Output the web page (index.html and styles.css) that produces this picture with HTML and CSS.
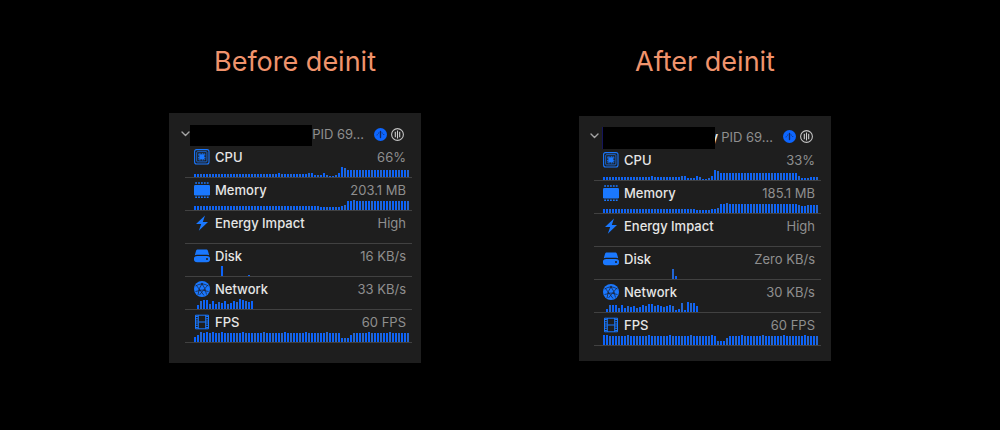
FILE: index.html
```
<!DOCTYPE html>
<html lang="en">
<head>
  <meta charset="UTF-8" />
  <meta name="viewport" content="width=device-width, initial-scale=1.0" />
  <title>Before and after deinit</title>
  <link rel="stylesheet" href="styles.css">
</head>
<body>
  <!-- shared icons -->
  <svg class="sprite" aria-hidden="true">
    <symbol id="chevron" viewBox="0 0 9 6"><path d="M1 1l3.500 3.500L8 1" fill="none" stroke="#a5a5a5" stroke-width="1.400" stroke-linecap="round" stroke-linejoin="round"/></symbol>
    <symbol id="gauge" viewBox="0 0 13 13">
      <circle cx="6.500" cy="6.500" r="6.500" fill="#0d66ff"/>
      <path d="M3 7.300a3.600 3.600 0 0 1 7 0" fill="none" stroke="#12265c" stroke-width="1" stroke-dasharray="1 1"/>
      <path d="M6.500 3.500v6" stroke="#12265c" stroke-width="1.300" stroke-linecap="round"/>
    </symbol>
    <symbol id="threads" viewBox="0 0 13 13">
      <circle cx="6.500" cy="6.500" r="5.900" fill="none" stroke="#c4c4c4" stroke-width="1.100"/>
      <path d="M4.300 3.700v5.600M6.500 2.500v8M8.700 3.700v5.600" stroke="#d0d0d0" stroke-width="1.100"/>
    </symbol>
    <symbol id="cpu" viewBox="0 0 16 16">
      <rect x=".6" y=".6" width="14.400" height="14.400" rx="2" fill="none" stroke="#1a78ff" stroke-width="1.100"/>
      <rect x="2.700" y="2.700" width="10.200" height="10.200" rx=".8" fill="none" stroke="#1a78ff" stroke-width=".8"/>
      <rect x="5.300" y="5.300" width="5" height="5" fill="#1a78ff"/>
      <path d="M4.800 4.800h6M4.800 10.800h6" stroke="#1a78ff" stroke-width="1.200" stroke-dasharray=".9 .7"/>
      <path d="M4.800 4.800v6M10.800 4.800v6" stroke="#1a78ff" stroke-width="1.200" stroke-dasharray=".9 .7"/>
    </symbol>
    <symbol id="memory" viewBox="0 0 16 16">
      <rect y="3" width="16" height="10.500" rx="1.200" fill="#1a78ff"/>
      <path d="M1.200 1h14M1.200 15.200h14" stroke="#1a78ff" stroke-width="1.600" stroke-dasharray="1.800 1.100"/>
    </symbol>
    <symbol id="energy" viewBox="0 0 16 16"><path d="M11 .5L2 9h5.200L4.800 15.800 14 7H8.800z" fill="#1a78ff"/></symbol>
    <symbol id="disk" viewBox="0 0 16 16">
      <path d="M3.900 1.500h8.200c1 0 1.500.5 1.900 1.400L15.200 7.300q-1-.5-2-.5H2.800q-1 0-2 .5L2 2.900c.4-.9.900-1.400 1.900-1.400z" fill="#1a78ff"/>
      <path fill-rule="evenodd" d="M3 7.900h10a3 3 0 0 1 0 6.300H3a3 3 0 0 1 0-6.300zM13 10.100a1 1 0 1 0 .01 2 1 1 0 0 0-.01-2z" fill="#1a78ff"/>
    </symbol>
    <symbol id="network" viewBox="0 0 16 16">
      <circle cx="8" cy="8" r="8" fill="#1a78ff"/>
      <g fill="none" stroke="#1b2a48" stroke-width=".8">
        <path d="M1.500 5Q5 3 8 2.800q3 .2 6.500 2.200M8 2.800Q4.500 7 4 14M8 2.800Q11.500 7 12.500 13.500M1.500 10.500Q8 7.500 14.500 10.500M2 4l4 5 4 5.500M14 4l-4.500 5L5.500 14"/>
      </g>
      <path d="M8 1.600L9.200 3 8 4.400 6.800 3zM5.400 8L6.600 9 5.400 10.200 4.200 9zM10.600 8l1.200 1-1.200 1.200L9.400 9z" fill="#1b2a48"/>
    </symbol>
    <symbol id="film" viewBox="0 0 16 16">
      <path d="M1.500 1.200h13v13.600h-13zM4.300 1v14M11.700 1v14M4.300 8h7.400" fill="none" stroke="#1a78ff" stroke-width="1"/>
      <path d="M2.900 2v12M13.100 2v12" stroke="#1a78ff" stroke-width="2" stroke-dasharray="1 1.200"/>
    </symbol>
  </svg>

  <main class="compare">
    <section class="side">
      <h1 class="title">Before deinit</h1>
      <div class="panel" id="before">
        <header class="process">
          <svg class="chevron"><use href="#chevron"/></svg>
          <span class="redacted"></span>
          <span class="pid">PID 69…</span>
          <svg class="badge"><use href="#gauge"/></svg>
          <svg class="badge"><use href="#threads"/></svg>
        </header>
      </div>
    </section>
    <section class="side side-after">
      <h1 class="title">After deinit</h1>
      <div class="panel" id="after">
        <header class="process">
          <svg class="chevron"><use href="#chevron"/></svg>
          <span class="redacted"></span>
          <span class="name">y</span>
          <span class="pid">PID 69…</span>
          <svg class="badge"><use href="#gauge"/></svg>
          <svg class="badge"><use href="#threads"/></svg>
        </header>
      </div>
    </section>
  </main>

  <script src="gauges.js"></script>
</body>
</html>
```
FILE: styles.css
```
* { box-sizing: border-box; }
body {
  margin: 0;
  background: #000;
  color: #e6e6e6;
  font-family: Inter, "Liberation Sans", sans-serif;
  font-size: 13px;
}
.sprite { display: none; }

.compare {
  display: flex;
  justify-content: center;
  align-items: flex-start;
  gap: 158px;
  padding: 44px 16px;
}
.side { flex: 0 1 252px; }
.title {
  margin: 0 0 33px;
  color: #f0936c;
  font-size: 27px;
  font-weight: 400;
  line-height: 36px;
  text-align: center;
  white-space: nowrap;
}
.panel {
  background: #1e1e1e;
  padding: 12px 9px 20px 16px;
}
.side-after .title { margin-bottom: 36px; }
.side-after .panel { padding: 11px 10px 15px 15px; }

/* process header */
.process {
  display: flex;
  align-items: flex-start;
  height: 20px;
  margin-left: -4px;
  padding-right: 8px;
  line-height: 18px;
}
.side-after .process { height: 21px; line-height: 20px; }
.chevron { flex: none; width: 9px; height: 6px; margin-top: 6px; }
.redacted { flex: 1; height: 21px; background: #000; }
/* the bar covers most of the name */
.side-after .redacted {
  position: relative;
  height: 22px;
  margin-left: 3px;
  margin-right: -5px;
  border-left: 1px solid #15155c;
}
.name { margin-right: 3px; font-weight: 600; }
.pid { color: #8f8f8f; margin-right: 10px; white-space: nowrap; }
.badge { flex: none; width: 13px; height: 13px; margin-top: 3px; }
.badge + .badge { margin-left: 4px; }

/* gauge rows */
.gauge { border-bottom: 1px solid #414141; padding-top: 2px; }
.gauge-head {
  display: flex;
  align-items: center;
  height: 20px;
  padding: 0 6px 0 9px;
}
.icon { width: 16px; height: 16px; margin-right: 5px; }
.label { font-weight: 500; }
.value { margin-left: auto; color: #8f8f8f; }
.bars {
  display: flex;
  align-items: flex-end;
  gap: 1px;
  height: 10px;
  padding-left: 9px;
}
.bar { flex: 0 0 2px; background: #0c63fa; }
.bar:nth-child(3n) { background: #2566d0; }
```
FILE: gauges.js
```
const rep = (n, h) => Array(n).fill(h);

// about 60 fps with small peaks
const fps = (start, n) => Array.from({ length: n }, (_, i) => ((i + start) % 7 === 2 ? 10 : 9));

const data = {
  before: [
    ["cpu", "CPU", "66%", [...rep(28, 3), 4, ...rep(9, 3), 4, 4, 2, 2, 2, 4, 2, 1, 1, 2, 4, 10, 9, ...rep(21, 7)]],
    ["memory", "Memory", "203.1 MB", [...rep(42, 4), ...rep(7, 3), 4, 5, 9, 9, 10, ...rep(18, 9)]],
    ["energy", "Energy Impact", "High", []],
    ["disk", "Disk", "16 KB/s", [...rep(9, 0), 10, ...rep(8, 0), 1]],
    ["network", "Network", "33 KB/s", [0, 4, 8, 9, 9, 5, 8, 5, 7, 6, 8, 5, 6, 8, 7, 10, 9, 8, 7, 8]],
    ["film", "FPS", "60 FPS", [5, 7, 10, 9, 10, 9, 10, ...fps(7, 42), 4, 4, 4, 7, ...fps(4, 19)]]
  ],
  after: [
    ["cpu", "CPU", "33%", [...rep(16, 3), 4, ...rep(9, 3), 4, 4, 2, 2, 2, 4, 3, 1, 1, 2, 4, 10, 9, ...rep(26, 7), 4, 2, 2, 2, 3, 3, 3]],
    ["memory", "Memory", "185.1 MB", [...rep(31, 4), ...rep(5, 3), 4, 4, 5, 9, 9, 10, ...rep(23, 9), 8, 7, 7, ...rep(4, 8)]],
    ["energy", "Energy Impact", "High", []],
    ["disk", "Disk", "Zero KB/s", [...rep(23, 0), 10, 3]],
    ["network", "Network", "30 KB/s", [0, 3, 7, 7, 7, 4, 7, 4, 6, 5, 6, 4, 5, 7, 6, 8, 8, 6, 7, 6, 5, 6, 7, 6, 2, 3, 9, 2, 10, 9, 9, 6]],
    ["film", "FPS", "60 FPS", [10, 10, ...fps(3, 36), 4, 4, 4, 7, ...fps(5, 30)]]
  ]
};

for (const id in data) {
  const panel = document.getElementById(id);
  data[id].forEach(([icon, label, value, bars]) => {
    panel.insertAdjacentHTML("beforeend", `
      <div class="gauge">
        <div class="gauge-head">
          <svg class="icon"><use href="#${icon}"/></svg>
          <span class="label">${label}</span>
          <span class="value">${value}</span>
        </div>
        <div class="bars">${bars.map(h => `<i class="bar" style="height:${h}px"></i>`).join("")}</div>
      </div>`);
  });
}
```
